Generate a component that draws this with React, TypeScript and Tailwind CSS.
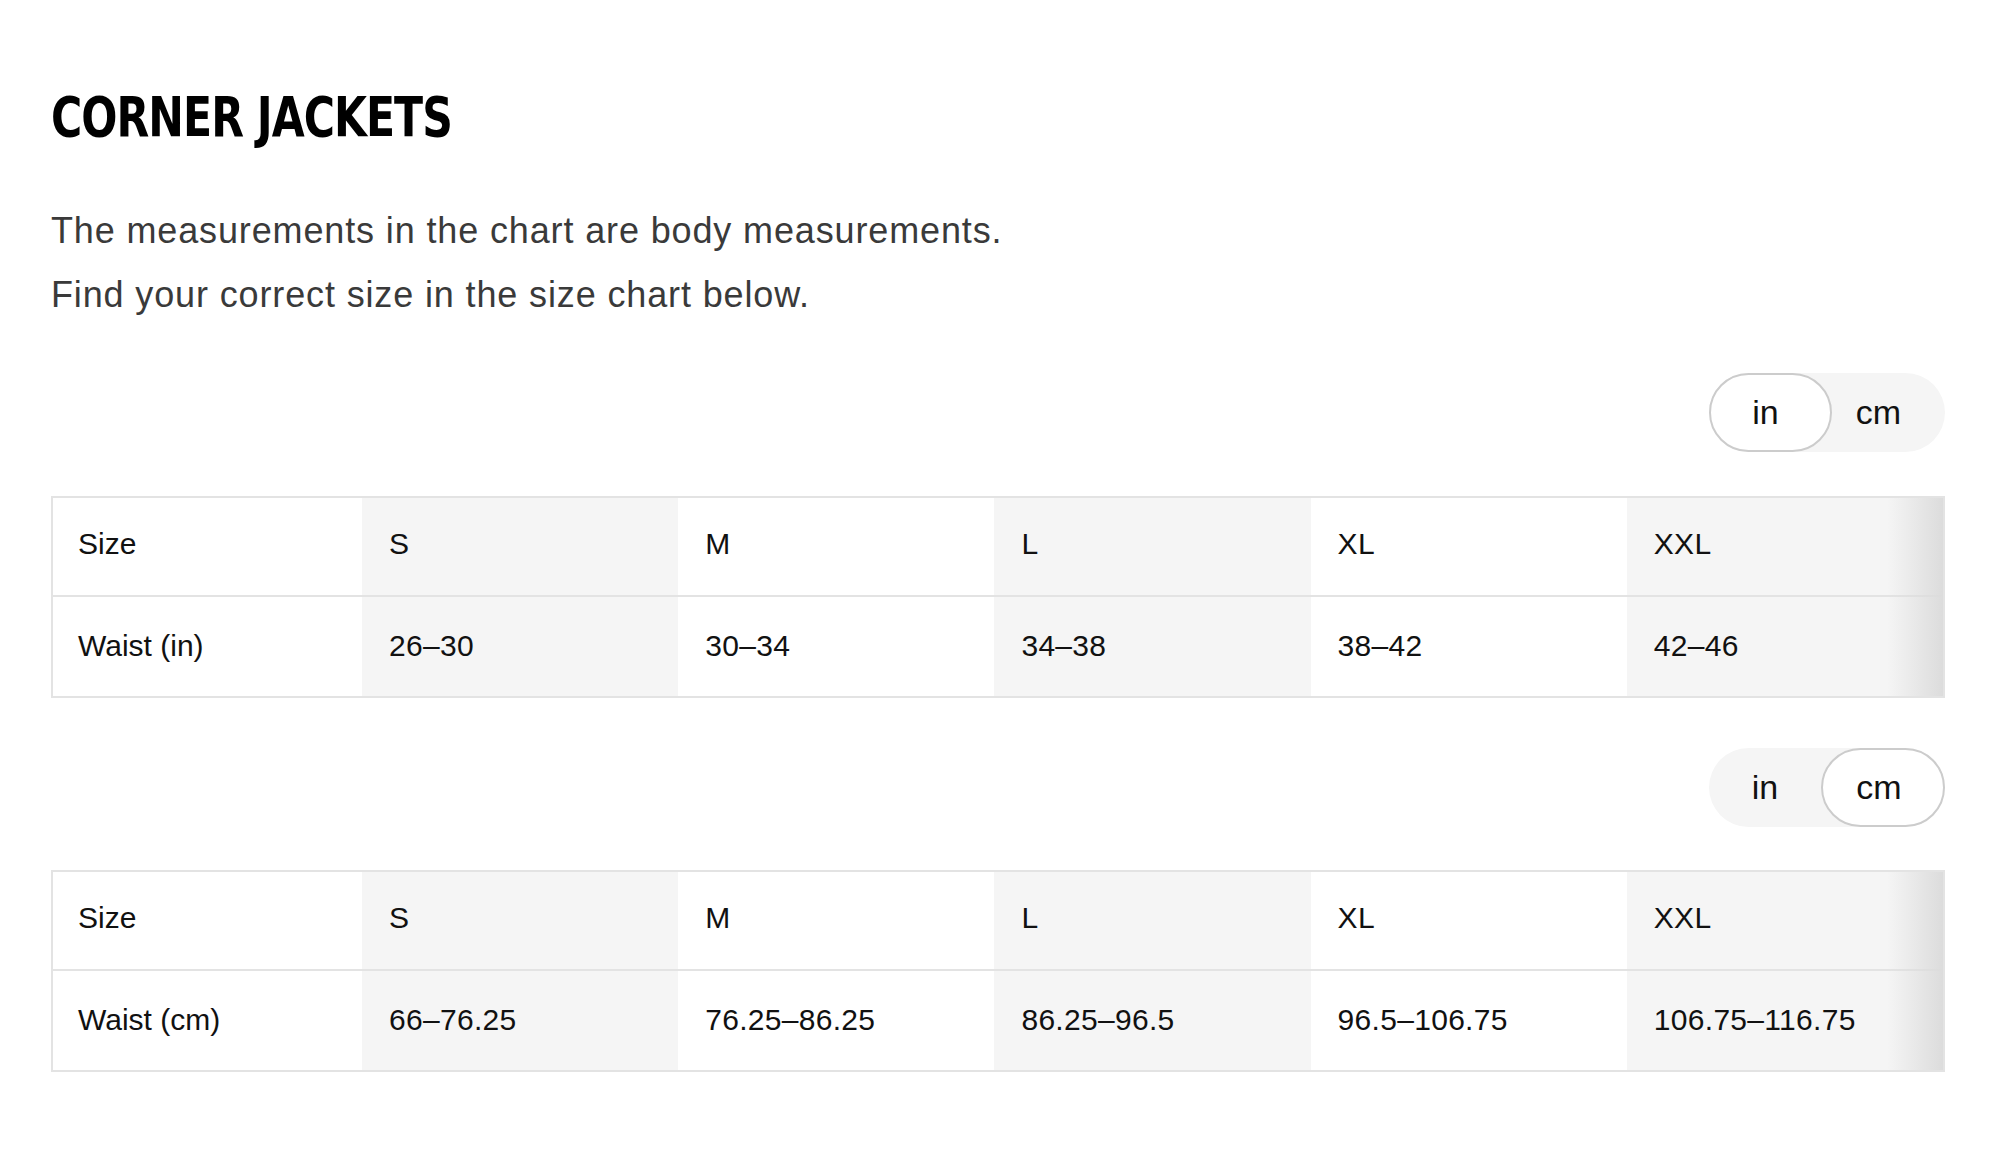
import { useState } from "react";

type Unit = "in" | "cm";

const sizes = ["S", "M", "L", "XL", "XXL"];
const waist: Record<Unit, string[]> = {
  in: ["26–30", "30–34", "34–38", "38–42", "42–46"],
  cm: ["66–76.25", "76.25–86.25", "86.25–96.5", "96.5–106.75", "106.75–116.75"],
};

function UnitToggle({ value, onChange }: { value: Unit; onChange: (u: Unit) => void }) {
  return (
    <div className="flex justify-end">
      <div className="flex h-[79px] w-[236px] rounded-full bg-[#f5f5f5] text-[34px] text-[#111]">
        <button
          onClick={() => onChange("in")}
          className={
            value === "in"
              ? "h-full w-[123px] rounded-full border-2 border-[#cccccc] bg-white pr-[10px]"
              : "h-full w-[112px] rounded-full"
          }
        >
          in
        </button>
        <button
          onClick={() => onChange("cm")}
          className={
            value === "cm"
              ? "h-full w-[124px] rounded-full border-2 border-[#cccccc] bg-white pr-[8px]"
              : "h-full w-[113px] rounded-full pr-[20px]"
          }
        >
          cm
        </button>
      </div>
    </div>
  );
}

function SizeTable({ unit }: { unit: Unit }) {
  const rows = [
    { label: "Size", cells: sizes },
    { label: `Waist (${unit})`, cells: waist[unit] },
  ];
  return (
    <div className="relative border-2 border-[#e3e3e3] text-[30px] text-[#111]">
      {rows.map((row, r) => (
        <div
          key={row.label}
          className={`grid h-[99px] grid-cols-[309px_repeat(5,1fr)] ${r === 0 ? "border-b-2 border-[#e3e3e3]" : ""}`}
        >
          <div className={`flex items-center bg-white pl-[25px] ${r === 0 ? "pb-[6px]" : "pb-[2px]"}`}>{row.label}</div>
          {row.cells.map((c, i) => (
            <div
              key={i}
              className={`flex items-center pl-[27px] tracking-[0.01em] ${r === 0 ? "pb-[6px]" : "pb-[2px]"} ${i % 2 === 0 ? "bg-[#f5f5f5]" : "bg-white"}`}
            >
              {c}
            </div>
          ))}
        </div>
      ))}
      {/* scroll fade on the right edge */}
      <div className="pointer-events-none absolute inset-y-0 right-0 w-[56px] bg-gradient-to-r from-transparent to-[#dcdcdc]" />
    </div>
  );
}

export default function App() {
  const [first, setFirst] = useState<Unit>("in");
  const [second, setSecond] = useState<Unit>("cm");

  return (
    <div className="min-h-screen bg-white pl-[51px] pr-[55px] pt-[90px] font-['Liberation_Sans',Arial,sans-serif]">
      <h1 className="origin-left scale-x-[0.86] font-['DejaVu_Sans_Condensed',sans-serif] text-[55px] font-bold leading-none tracking-[-0.02em] text-black">
        CORNER JACKETS
      </h1>

      <div className="mt-[54px] text-[36px] leading-[64px] tracking-[0.024em] text-[#3a3a3a]">
        <p>The measurements in the chart are body measurements.</p>
        <p>Find your correct size in the size chart below.</p>
      </div>

      <div className="mt-[46px]">
        <UnitToggle value={first} onChange={setFirst} />
        <div className="mt-[44px]">
          <SizeTable unit={first} />
        </div>
      </div>

      <div className="mt-[50px]">
        <UnitToggle value={second} onChange={setSecond} />
        <div className="mt-[43px]">
          <SizeTable unit={second} />
        </div>
      </div>
    </div>
  );
}
